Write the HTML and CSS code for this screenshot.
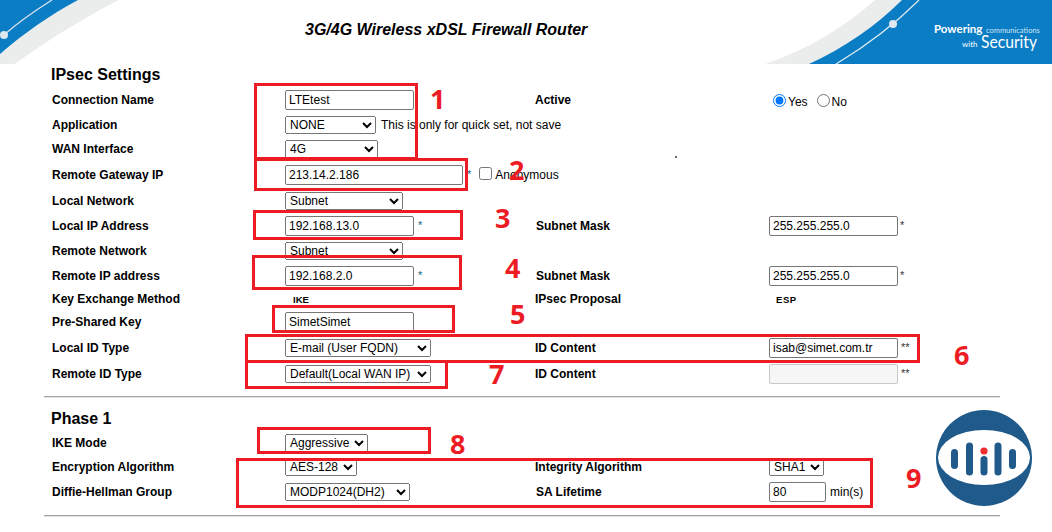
FILE: index.html
```html
<!DOCTYPE html>
<html lang="en">
<head>
<meta charset="utf-8">
<title>IPsec Settings</title>
<link rel="stylesheet" href="styles.css">
</head>
<body>
<header class="header">
  <svg class="swoosh-left" width="120" height="64" viewBox="0 0 120 64">
    <path d="M0 0H119C88 16 50 38 15 64H0Z" fill="#ebeded"/>
    <path d="M0 0H78C50 15 24 33 0 54Z" fill="#0a7dc4"/>
    <path d="M52 0C36 10 20 21 5 34" fill="none" stroke="#dfe8ee" stroke-width="1.2"/>
    <circle cx="4" cy="35" r="4" fill="#dfe8ee"/>
  </svg>
  <h1 class="title">3G/4G Wireless xDSL Firewall Router</h1>
  <svg class="swoosh-right" width="290" height="64" viewBox="0 0 290 64">
    <path d="M3 64C44 50 82 28 113 0H290V64Z" fill="#ebeded"/>
    <path d="M47 64C82 48 114 26 140 0H290V64Z" fill="#0a7dc4"/>
    <path d="M74 64C104 46 133 24 157 0" fill="none" stroke="#e6eef3" stroke-width="1.2"/>
    <circle cx="131" cy="24" r="4" fill="#dfe8ee"/>
    <text class="brand-strong" x="172" y="33">Powering</text>
    <text class="brand-small" x="224" y="33">communications</text>
    <text class="brand-with" x="200" y="47">with</text>
    <text class="brand-big" x="219" y="48" textLength="56" lengthAdjust="spacingAndGlyphs">Security</text>
  </svg>
</header>

<main class="form">
  <h2 class="section-title">IPsec Settings</h2>
  <div class="row r24">
    <label class="label">Connection Name</label>
    <div class="field"><input class="input w129" type="text" value="LTEtest"></div>
    <label class="label">Active</label>
    <div class="field radios">
      <input class="radio" type="radio" name="active" checked><span class="opt">Yes</span>
      <input class="radio" type="radio" name="active"><span class="opt">No</span>
    </div>
  </div>
  <div class="row r26">
    <label class="label">Application</label>
    <div class="field span3">
      <select class="select w91"><option>NONE</option></select>
      <span class="note">This is only for quick set, not save</span>
    </div>
  </div>
  <div class="row r22">
    <label class="label">WAN Interface</label>
    <div class="field span3"><select class="select w93"><option>4G</option></select></div>
  </div>
  <div class="row r30">
    <label class="label">Remote Gateway IP</label>
    <div class="field span3">
      <input class="input w178" type="text" value="213.14.2.186">
      <span class="star">*</span>
      <input class="check" type="checkbox">
      <span class="anon">Anonymous</span>
    </div>
  </div>
  <div class="row r22">
    <label class="label">Local Network</label>
    <div class="field span3"><select class="select w118"><option>Subnet</option></select></div>
  </div>
  <div class="row r28">
    <label class="label">Local IP Address</label>
    <div class="field"><input class="input w129" type="text" value="192.168.13.0"><span class="star">*</span></div>
    <label class="label nudge">Subnet Mask</label>
    <div class="field"><input class="input w129" type="text" value="255.255.255.0"><span class="star tight">*</span></div>
  </div>
  <div class="row r22">
    <label class="label">Remote Network</label>
    <div class="field span3"><select class="select w118"><option>Subnet</option></select></div>
  </div>
  <div class="row r28">
    <label class="label">Remote IP address</label>
    <div class="field"><input class="input w129" type="text" value="192.168.2.0"><span class="star">*</span></div>
    <label class="label nudge">Subnet Mask</label>
    <div class="field"><input class="input w129" type="text" value="255.255.255.0"><span class="star tight">*</span></div>
  </div>
  <div class="row r18">
    <label class="label">Key Exchange Method</label>
    <div class="field"><span class="proto">IKE</span></div>
    <label class="label">IPsec Proposal</label>
    <div class="field"><span class="proto esp">ESP</span></div>
  </div>
  <div class="row r28">
    <label class="label">Pre-Shared Key</label>
    <div class="field"><input class="input w129" type="text" value="SimetSimet"></div>
  </div>
  <div class="row r24">
    <label class="label">Local ID Type</label>
    <div class="field"><select class="select w146"><option>E-mail (User FQDN)</option></select></div>
    <label class="label">ID Content</label>
    <div class="field"><input class="input w129" type="text" value="isab@simet.com.tr"><span class="star double">**</span></div>
  </div>
  <div class="row r28">
    <label class="label">Remote ID Type</label>
    <div class="field"><select class="select w146"><option>Default(Local WAN IP)</option></select></div>
    <label class="label">ID Content</label>
    <div class="field"><input class="input w129" type="text" disabled><span class="star double">**</span></div>
  </div>

  <div class="rule rule-a"></div>

  <h2 class="section-title section-tight">Phase 1</h2>
  <div class="row r30">
    <label class="label">IKE Mode</label>
    <div class="field span3"><select class="select w83"><option>Aggressive</option></select></div>
  </div>
  <div class="row r18">
    <label class="label">Encryption Algorithm</label>
    <div class="field"><select class="select w72"><option>AES-128</option></select></div>
    <label class="label">Integrity Algorithm</label>
    <div class="field"><select class="select w55"><option>SHA1</option></select></div>
  </div>
  <div class="row r32">
    <label class="label">Diffie-Hellman Group</label>
    <div class="field"><select class="select w125"><option>MODP1024(DH2)</option></select></div>
    <label class="label nudge">SA Lifetime</label>
    <div class="field"><input class="input w57" type="text" value="80"><span class="note unit">min(s)</span></div>
  </div>

  <div class="rule rule-b"></div>
</main>

<div class="speck"></div>

<div class="mark box1"></div>
<div class="mark box2"></div>
<div class="mark box3"></div>
<div class="mark box4"></div>
<div class="mark box5"></div>
<div class="mark box6"></div>
<div class="mark box7"></div>
<div class="mark box8"></div>
<div class="mark box9"></div>

<span class="num n1">1</span>
<span class="num n2">2</span>
<span class="num n3">3</span>
<span class="num n4">4</span>
<span class="num n5">5</span>
<span class="num n6">6</span>
<span class="num n7">7</span>
<span class="num n8">8</span>
<span class="num n9">9</span>

<svg class="logo" width="98" height="98" viewBox="0 0 98 98">
  <circle cx="49" cy="49" r="48" fill="#1f5a8b"/>
  <ellipse cx="49" cy="48.500" rx="46" ry="27.500" fill="#fff"/>
  <rect x="16" y="40" width="7" height="20" rx="3.500" fill="#1f5a8b"/>
  <rect x="31" y="33.500" width="7" height="33" rx="3.500" fill="#1f5a8b"/>
  <rect x="45.500" y="47" width="7" height="19.500" rx="3.500" fill="#1f5a8b"/>
  <circle cx="49" cy="42" r="3.600" fill="#ee2e2e"/>
  <rect x="59.500" y="33.500" width="7" height="33" rx="3.500" fill="#1f5a8b"/>
  <rect x="74" y="40" width="7" height="20" rx="3.500" fill="#1f5a8b"/>
</svg>
</body>
</html>
```

FILE: styles.css
```css
* { box-sizing: border-box; }

html, body {
  margin: 0;
  padding: 0;
  background: #fff;
}

body {
  position: relative;
  width: 1052px;
  height: 532px;
  overflow: hidden;
  font-family: "Liberation Sans", Arial, sans-serif;
  font-size: 12px;
  color: #000;
}

/* Header */
.header {
  display: flex;
  align-items: flex-start;
  height: 64px;
}

.swoosh-left, .swoosh-right { display: block; flex: none; }
.swoosh-right { margin-left: auto; }

.title {
  margin: 20px 0 0 185px;
  font-size: 16px;
  line-height: 20px;
  font-weight: bold;
  font-style: italic;
  white-space: nowrap;
}

.brand-strong { font: bold 11.500px Lato, sans-serif; fill: #fff; }
.brand-small { font: 7.500px Lato, sans-serif; fill: #cfe4f3; }
.brand-with { font: 8px Lato, sans-serif; fill: #fff; }
.brand-big { font: 18px Lato, sans-serif; fill: #fff; }

/* Form */
.form {
  width: 956px;
  margin-left: 44px;
}

.section-title {
  margin: 1px 0 3px;
  padding-left: 7px;
  font-size: 16px;
  line-height: 20px;
  font-weight: bold;
}

.section-tight { margin: 11px 0 -1px; }

.row {
  display: grid;
  grid-template-columns: 233px 250px 234px 1fr;
  align-items: center;
  padding-left: 8px;
}

.r18 { height: 18px; }
.r22 { height: 22px; }
.r24 { height: 24px; }
.r26 { height: 26px; }
.r28 { height: 28px; }
.r30 { height: 30px; }
.r32 { height: 32px; }

.label {
  font-weight: bold;
  white-space: nowrap;
}

.nudge { padding-left: 1px; }

.field {
  display: flex;
  align-items: center;
  white-space: nowrap;
}

.span3 { grid-column: 2 / 5; }

.input, .select {
  font-family: "Liberation Sans", Arial, sans-serif;
  font-size: 12px;
  color: #000;
  flex: none;
}

.input {
  height: 20px;
  padding: 1px 3px;
  border: 1px solid #767676;
  border-radius: 2px;
  background: #fff;
}

.input:disabled {
  background: #f6f6f6;
  border-color: #c8c8c8;
}

.select { height: 18px; }

.w55 { width: 55px; }
.w57 { width: 57px; }
.w72 { width: 72px; }
.w83 { width: 83px; }
.w91 { width: 91px; }
.w93 { width: 93px; }
.w118 { width: 118px; }
.w125 { width: 125px; }
.w129 { width: 129px; }
.w146 { width: 146px; }
.w178 { width: 178px; }

.note { margin-left: 5px; }
.unit { margin-left: 4px; }
.anon { margin-left: 3px; }

.star {
  margin: -2px 0 0 4px;
  color: #0b5f8a;
  font-size: 11px;
}

.star.tight { margin-left: 2px; color: #333; }
.star.double { margin-left: 3px; color: #333; }

.check {
  width: 13px;
  height: 13px;
  margin: -3px 0 0 8px;
}

.radios { padding: 3px 0 0 4px; }

.radio {
  width: 13px;
  height: 13px;
  margin: -3px 0 0 0;
}

.opt { margin: 0 9px 0 2px; }

.proto {
  margin-left: 8px;
  font-size: 9.500px;
  font-weight: bold;
}

.proto.esp { margin-left: 7px; letter-spacing: 0.600px; }

.rule {
  height: 2px;
  background: #a3a3a3;
  border-bottom: 1px solid #e4e4e4;
}

.rule-a { margin-top: 8px; }
.rule-b { margin-top: 7px; }

/* Overlaid annotations */
.speck {
  position: absolute;
  left: 675px;
  top: 156px;
  width: 2px;
  height: 2px;
  background: #666;
}

.mark {
  position: absolute;
  border: 3px solid #ed1c24;
}

.box1 { left: 254px; top: 83px; width: 164px; height: 77px; }
.box2 { left: 254px; top: 158px; width: 214px; height: 33px; }
.box3 { left: 253px; top: 210px; width: 210px; height: 30px; }
.box4 { left: 252px; top: 255px; width: 210px; height: 35px; }
.box5 { left: 272px; top: 305px; width: 183px; height: 28px; }
.box6 { left: 245px; top: 334px; width: 675px; height: 29px; }
.box7 { left: 245px; top: 360px; width: 203px; height: 29px; }
.box8 { left: 257px; top: 427px; width: 174px; height: 27px; }
.box9 { left: 236px; top: 458px; width: 637px; height: 50px; }

.num {
  position: absolute;
  font-family: "Open Sans", sans-serif;
  font-size: 27px;
  line-height: 30px;
  font-weight: bold;
  color: #ed1c24;
}

.n1 { left: 430px; top: 84px; }
.n2 { left: 509px; top: 155px; }
.n3 { left: 495px; top: 203px; }
.n4 { left: 505px; top: 253px; }
.n5 { left: 510px; top: 299px; }
.n6 { left: 954px; top: 340px; }
.n7 { left: 489px; top: 359px; }
.n8 { left: 450px; top: 429px; }
.n9 { left: 906px; top: 463px; }

.logo {
  position: absolute;
  left: 935px;
  top: 409px;
}
```
